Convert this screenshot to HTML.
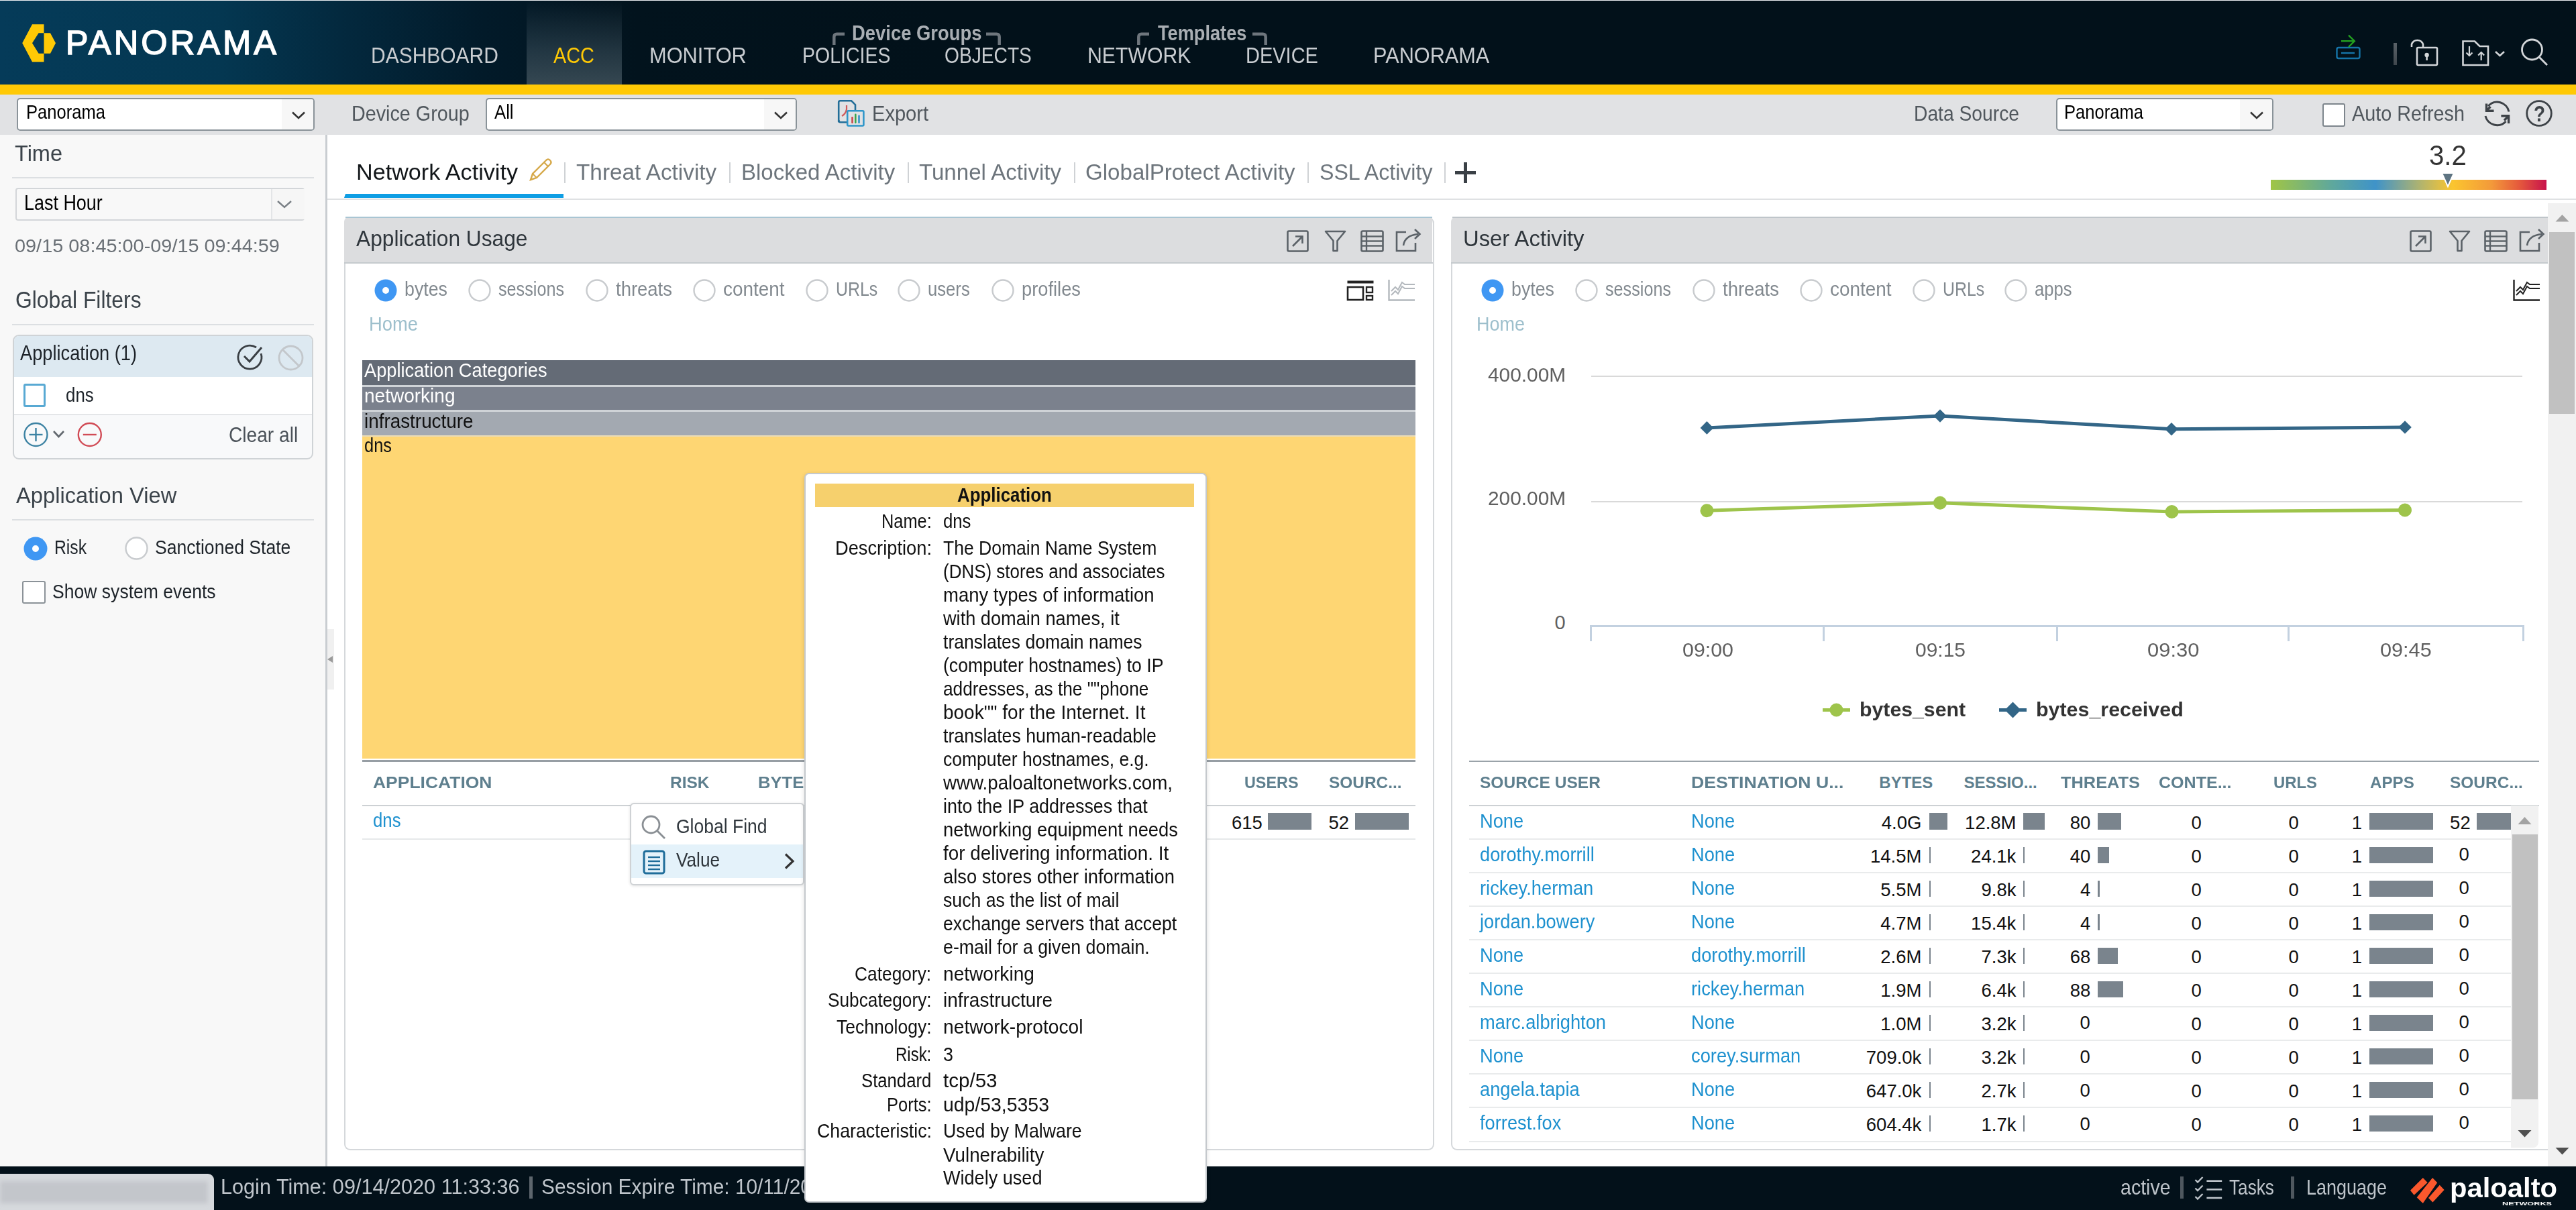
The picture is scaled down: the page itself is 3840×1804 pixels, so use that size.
<!DOCTYPE html>
<html><head><meta charset="utf-8"><title>Panorama ACC</title>
<style>
html,body{margin:0;padding:0;}
body{width:3840px;height:1804px;position:relative;overflow:hidden;background:#fff;font-family:"Liberation Sans",sans-serif;}
.t{position:absolute;white-space:nowrap;}
svg{overflow:visible}
</style></head><body>
<div style="position:absolute;left:0.0px;top:0.0px;width:3840.0px;height:126.0px;background:linear-gradient(90deg,#053b59 0px,#043751 330px,#03283d 520px,#021a29 720px,#02131d 950px,#02111a 1400px,#02111a 3840px);"></div>
<div style="position:absolute;left:0.0px;top:0.0px;width:3840.0px;height:1.0px;background:#eef0f4;"></div>
<div style="position:absolute;left:785.0px;top:1.0px;width:142.0px;height:125.0px;background:linear-gradient(180deg,rgba(60,80,92,0) 0%,rgba(60,80,92,0.55) 60%,rgba(62,80,90,0.85) 100%);"></div>
<svg style="position:absolute;left:30.0px;top:34.0px;" width="56.0" height="61.0" viewBox="0 0 56.0 61.0"><polygon fill="#ffc905" points="18,2.3 35.5,2.3 35.5,15.3 27.6,15.3 18,30.3 27.6,45.7 35.5,45.7 35.5,58.2 18,58.2 3.2,30.3"/><polygon fill="#ffc905" points="35.5,15.3 45,15.3 53,30.3 45,45.7 35.5,45.7"/></svg>
<div class="t" style="left:97.8px;top:38.7px;font-size:50.70px;line-height:50.70px;color:#ffffff;font-weight:normal;letter-spacing:4px;-webkit-text-stroke:1.5px #ffffff;">PANORAMA</div>
<div class="t" style="left:553.0px;top:66.8px;font-size:32.60px;line-height:32.60px;color:#c9cdd1;font-weight:normal;transform:scaleX(0.9200);transform-origin:0 0;">DASHBOARD</div>
<div class="t" style="left:968.0px;top:66.8px;font-size:32.60px;line-height:32.60px;color:#c9cdd1;font-weight:normal;transform:scaleX(0.9453);transform-origin:0 0;">MONITOR</div>
<div class="t" style="left:1195.5px;top:66.8px;font-size:32.60px;line-height:32.60px;color:#c9cdd1;font-weight:normal;transform:scaleX(0.8745);transform-origin:0 0;">POLICIES</div>
<div class="t" style="left:1408.0px;top:66.8px;font-size:32.60px;line-height:32.60px;color:#c9cdd1;font-weight:normal;transform:scaleX(0.8645);transform-origin:0 0;">OBJECTS</div>
<div class="t" style="left:1621.0px;top:66.8px;font-size:32.60px;line-height:32.60px;color:#c9cdd1;font-weight:normal;transform:scaleX(0.9274);transform-origin:0 0;">NETWORK</div>
<div class="t" style="left:1857.0px;top:66.8px;font-size:32.60px;line-height:32.60px;color:#c9cdd1;font-weight:normal;transform:scaleX(0.8900);transform-origin:0 0;">DEVICE</div>
<div class="t" style="left:2046.6px;top:66.8px;font-size:32.60px;line-height:32.60px;color:#c9cdd1;font-weight:normal;transform:scaleX(0.9414);transform-origin:0 0;">PANORAMA</div>
<div class="t" style="left:825.0px;top:66.8px;font-size:32.60px;line-height:32.60px;color:#ffc905;font-weight:normal;transform:scaleX(0.8858);transform-origin:0 0;">ACC</div>
<div class="t" style="left:1269.8px;top:34.0px;font-size:31.00px;line-height:31.00px;color:#a9aeb3;font-weight:bold;transform:scaleX(0.8840);transform-origin:0 0;">Device Groups</div>
<div class="t" style="left:1725.6px;top:34.0px;font-size:31.00px;line-height:31.00px;color:#a9aeb3;font-weight:bold;transform:scaleX(0.8765);transform-origin:0 0;">Templates</div>
<svg style="position:absolute;left:1240.5px;top:46.0px;" width="20.0" height="24.0" viewBox="0 0 20.0 24.0"><path d="M2.3,21 V9 Q2.3,4.7 6.5,4.7 H18" fill="none" stroke="#6e767d" stroke-width="4.5"/></svg>
<svg style="position:absolute;left:1470.0px;top:46.0px;" width="22.0" height="24.0" viewBox="0 0 22.0 24.0"><path d="M0,4.7 H15.5 Q19.7,4.7 19.7,9 V21" fill="none" stroke="#6e767d" stroke-width="4.5"/></svg>
<svg style="position:absolute;left:1695.0px;top:46.0px;" width="20.0" height="24.0" viewBox="0 0 20.0 24.0"><path d="M2.3,21 V9 Q2.3,4.7 6.5,4.7 H18" fill="none" stroke="#6e767d" stroke-width="4.5"/></svg>
<svg style="position:absolute;left:1867.0px;top:46.0px;" width="22.0" height="24.0" viewBox="0 0 22.0 24.0"><path d="M0,4.7 H15.5 Q19.7,4.7 19.7,9 V21" fill="none" stroke="#6e767d" stroke-width="4.5"/></svg>
<svg style="position:absolute;left:3480.0px;top:50.0px;" width="42.0" height="40.0" viewBox="0 0 42.0 40.0"><rect x="3.5" y="21" width="34" height="16" rx="2.5" fill="none" stroke="#1574a8" stroke-width="2.4"/><line x1="10" y1="29" x2="30" y2="29" stroke="#1574a8" stroke-width="2.4"/><line x1="10" y1="11.2" x2="29.5" y2="11.2" stroke="#23a020" stroke-width="2.4"/><polyline points="21,2.7 29.8,11.2 21,20" fill="none" stroke="#23a020" stroke-width="2.4"/></svg>
<div style="position:absolute;left:3568.3px;top:64.0px;width:4.7px;height:33.0px;background:linear-gradient(180deg,#5a6268,#3f474d);"></div>
<svg style="position:absolute;left:3590.0px;top:55.0px;" width="50.0" height="45.0" viewBox="0 0 50.0 45.0"><path d="M5,15 V11 A9,9 0 0 1 22,11 V15" fill="none" stroke="#d3d6d9" stroke-width="2.6"/><rect x="13" y="16" width="30" height="26" rx="1.5" fill="none" stroke="#d3d6d9" stroke-width="2.6"/><circle cx="27.6" cy="27" r="3.2" fill="#d3d6d9"/><line x1="27.6" y1="27" x2="27.6" y2="35" stroke="#d3d6d9" stroke-width="2.6"/></svg>
<svg style="position:absolute;left:3668.0px;top:58.0px;" width="72.0" height="42.0" viewBox="0 0 72.0 42.0"><path d="M3.5,39 V3.5 H21 L28.5,11 H41 V39 Z" fill="none" stroke="#d3d6d9" stroke-width="2.6"/><path d="M13,11 V25 M8.5,20.5 L13,25 L17.5,20.5" fill="none" stroke="#d3d6d9" stroke-width="2.2"/><path d="M30.7,32 V20 M26.2,24.5 L30.7,20 L35.2,24.5" fill="none" stroke="#d3d6d9" stroke-width="2.2"/><polyline points="52,19 58.5,25 65,19" fill="none" stroke="#d3d6d9" stroke-width="2.6"/></svg>
<svg style="position:absolute;left:3755.0px;top:55.0px;" width="47.0" height="45.0" viewBox="0 0 47.0 45.0"><circle cx="19.5" cy="19" r="15" fill="none" stroke="#d3d6d9" stroke-width="2.8"/><line x1="30" y1="30" x2="42" y2="42" stroke="#d3d6d9" stroke-width="2.8"/></svg>
<div style="position:absolute;left:0.0px;top:126.0px;width:3840.0px;height:15.0px;background:#ffc905;"></div>
<div style="position:absolute;left:0.0px;top:141.0px;width:3840.0px;height:60.0px;background:#e1e2e4;"></div>
<div style="position:absolute;left:25.0px;top:146.0px;width:444.0px;height:49.0px;box-sizing:border-box;background:#fff;border:2px solid #8a9399;border-radius:5px;"></div>
<div style="position:absolute;left:420.0px;top:148.0px;width:47.0px;height:45.0px;background:#f7f7f7;border-radius:0 3px 3px 0;"></div>
<svg style="position:absolute;left:433.5px;top:164.5px;" width="22.0" height="14.0" viewBox="0 0 22.0 14.0"><polyline points="2,2.5 11,11 20,2.5" fill="none" stroke="#333" stroke-width="2.6"/></svg>
<div class="t" style="left:39.0px;top:153.3px;font-size:29.00px;line-height:29.00px;color:#000;font-weight:normal;transform:scaleX(0.8817);transform-origin:0 0;">Panorama</div>
<div class="t" style="left:524.0px;top:153.5px;font-size:31.50px;line-height:31.50px;color:#50575d;font-weight:normal;transform:scaleX(0.9121);transform-origin:0 0;">Device Group</div>
<div style="position:absolute;left:724.0px;top:146.0px;width:464.0px;height:49.0px;box-sizing:border-box;background:#fff;border:2px solid #8a9399;border-radius:5px;"></div>
<div style="position:absolute;left:1139.0px;top:148.0px;width:47.0px;height:45.0px;background:#f7f7f7;border-radius:0 3px 3px 0;"></div>
<svg style="position:absolute;left:1152.5px;top:164.5px;" width="22.0" height="14.0" viewBox="0 0 22.0 14.0"><polyline points="2,2.5 11,11 20,2.5" fill="none" stroke="#333" stroke-width="2.6"/></svg>
<div class="t" style="left:737.4px;top:153.3px;font-size:29.00px;line-height:29.00px;color:#000;font-weight:normal;transform:scaleX(0.8865);transform-origin:0 0;">All</div>
<svg style="position:absolute;left:1240.0px;top:143.0px;" width="52.0" height="50.0" viewBox="0 0 52.0 50.0"><path d="M10.2,39.2 V9.5 Q10.2,7.2 12.5,7.2 H29 L35,13.2 V21.5" fill="none" stroke="#236e98" stroke-width="2.6"/><path d="M10.2,36 Q10.2,39.2 13,39.2 H22.5" fill="none" stroke="#236e98" stroke-width="2.6"/><path d="M22,14 V20 Q20.5,27 15,30" fill="none" stroke="#d05a5a" stroke-width="2.2"/><rect x="23.2" y="22.3" width="24.2" height="22.2" rx="1.5" fill="#e1e2e4" stroke="#2e96c9" stroke-width="2.6"/><rect x="29.2" y="31" width="2.6" height="10" rx="1.3" fill="#c9484a"/><rect x="34" y="26.5" width="2.6" height="14.5" rx="1.3" fill="#3aa64c"/><rect x="39.2" y="28.5" width="2.6" height="12.5" rx="1.3" fill="#3194c6"/></svg>
<div class="t" style="left:1300.0px;top:153.5px;font-size:31.50px;line-height:31.50px;color:#50575d;font-weight:normal;transform:scaleX(0.9227);transform-origin:0 0;">Export</div>
<div class="t" style="left:2853.0px;top:153.5px;font-size:31.50px;line-height:31.50px;color:#50575d;font-weight:normal;transform:scaleX(0.8964);transform-origin:0 0;">Data Source</div>
<div style="position:absolute;left:3065.0px;top:146.0px;width:324.0px;height:49.0px;box-sizing:border-box;background:#fff;border:2px solid #8a9399;border-radius:5px;"></div>
<div style="position:absolute;left:3339.0px;top:148.0px;width:48.0px;height:45.0px;background:#f7f7f7;border-radius:0 3px 3px 0;"></div>
<svg style="position:absolute;left:3353.0px;top:164.5px;" width="22.0" height="14.0" viewBox="0 0 22.0 14.0"><polyline points="2,2.5 11,11 20,2.5" fill="none" stroke="#333" stroke-width="2.6"/></svg>
<div class="t" style="left:3077.0px;top:153.3px;font-size:29.00px;line-height:29.00px;color:#000;font-weight:normal;transform:scaleX(0.8817);transform-origin:0 0;">Panorama</div>
<div style="position:absolute;left:3462.0px;top:154.0px;width:34.0px;height:35.0px;box-sizing:border-box;background:#fff;border:2px solid #7d858c;border-radius:3px;"></div>
<div class="t" style="left:3506.0px;top:153.5px;font-size:31.50px;line-height:31.50px;color:#50575d;font-weight:normal;transform:scaleX(0.9136);transform-origin:0 0;">Auto Refresh</div>
<svg style="position:absolute;left:3700.0px;top:148.0px;" width="46.0" height="44.0" viewBox="0 0 46.0 44.0"><path d="M40,18.5 A18,18 0 0 0 9,10" fill="none" stroke="#3d4247" stroke-width="3"/><polyline points="6.5,6.5 6.5,17.2 17.5,17.2" fill="none" stroke="#3d4247" stroke-width="3.4"/><line x1="6.5" y1="17.2" x2="12.5" y2="11" stroke="#3d4247" stroke-width="3.4"/><path d="M5,25 A18,18 0 0 0 35.5,33" fill="none" stroke="#3d4247" stroke-width="3"/><polyline points="28.4,24.8 39.6,24.8 39.6,36" fill="none" stroke="#3d4247" stroke-width="3.4"/><line x1="39.6" y1="24.8" x2="33" y2="31.5" stroke="#3d4247" stroke-width="3.4"/></svg>
<svg style="position:absolute;left:3762.0px;top:146.0px;" width="46.0" height="46.0" viewBox="0 0 46.0 46.0"><circle cx="23" cy="23" r="18.3" fill="none" stroke="#3d4247" stroke-width="2.8"/></svg>
<div class="t" style="left:3776.5px;top:152.9px;font-size:33.00px;line-height:33.00px;color:#3d4247;font-weight:bold;transform:scaleX(0.8445);transform-origin:0 0;">?</div>
<div style="position:absolute;left:0.0px;top:201.0px;width:485.0px;height:1538.0px;background:#f8f8f8;"></div>
<div style="position:absolute;left:485.0px;top:201.0px;width:3.0px;height:1538.0px;background:#c9cdd1;"></div>
<div class="t" style="left:22.0px;top:211.1px;font-size:34.00px;line-height:34.00px;color:#3b434a;font-weight:normal;transform:scaleX(0.9557);transform-origin:0 0;">Time</div>
<div style="position:absolute;left:18.0px;top:264.0px;width:450.0px;height:2.0px;background:#dcdfe2;"></div>
<div style="position:absolute;left:23.0px;top:280.0px;width:431.0px;height:49.0px;box-sizing:border-box;background:#f8f8f8;border:2px solid #d3d6d9;border-radius:4px;"></div>
<div style="position:absolute;left:404.0px;top:282.0px;width:48.0px;height:45.0px;background:#f6f6f6;border-left:2px solid #e3e5e7;"></div>
<svg style="position:absolute;left:412.0px;top:298.0px;" width="24.0" height="14.0" viewBox="0 0 24.0 14.0"><polyline points="2,2 12,11 22,2" fill="none" stroke="#7a8086" stroke-width="2.4"/></svg>
<div class="t" style="left:36.0px;top:286.7px;font-size:31.50px;line-height:31.50px;color:#000000;font-weight:normal;transform:scaleX(0.8553);transform-origin:0 0;">Last Hour</div>
<div class="t" style="left:22.0px;top:352.2px;font-size:28.30px;line-height:28.30px;color:#6a7076;font-weight:normal;transform:scaleX(1.0203);transform-origin:0 0;">09/15 08:45:00-09/15 09:44:59</div>
<div class="t" style="left:23.0px;top:429.2px;font-size:35.00px;line-height:35.00px;color:#3b434a;font-weight:normal;transform:scaleX(0.9100);transform-origin:0 0;">Global Filters</div>
<div style="position:absolute;left:18.0px;top:483.0px;width:450.0px;height:2.0px;background:#dcdfe2;"></div>
<div style="position:absolute;left:19.0px;top:499.0px;width:448.0px;height:186.0px;box-sizing:border-box;border:2px solid #cfd3d6;border-radius:9px;background:#f8f9fa;overflow:hidden;"></div>
<div style="position:absolute;left:21.0px;top:501.0px;width:444.0px;height:61.0px;background:#dde9f1;border-radius:7px 7px 0 0;"></div>
<div style="position:absolute;left:21.0px;top:562.0px;width:444.0px;height:55.0px;background:#ffffff;"></div>
<div style="position:absolute;left:21.0px;top:617.0px;width:444.0px;height:2.0px;background:#e4e6e8;"></div>
<div class="t" style="left:30.0px;top:511.2px;font-size:31.50px;line-height:31.50px;color:#1d2329;font-weight:normal;transform:scaleX(0.8641);transform-origin:0 0;">Application (1)</div>
<svg style="position:absolute;left:352.0px;top:510.0px;" width="46.0" height="45.0" viewBox="0 0 46.0 45.0"><path d="M37,17 A17.5,17.5 0 1 1 30,8" fill="none" stroke="#3a3f44" stroke-width="2.8"/><polyline points="12,21 20,29 38,8" fill="none" stroke="#3a3f44" stroke-width="3"/></svg>
<svg style="position:absolute;left:412.0px;top:512.0px;" width="44.0" height="43.0" viewBox="0 0 44.0 43.0"><circle cx="21.5" cy="21.5" r="17.5" fill="none" stroke="#c3c7cb" stroke-width="2.8"/><line x1="9" y1="9" x2="34" y2="34" stroke="#c3c7cb" stroke-width="2.8"/></svg>
<div style="position:absolute;left:35.0px;top:572.0px;width:33.0px;height:35.0px;box-sizing:border-box;background:#fff;border:3px solid #58a9d3;border-radius:3px;"></div>
<div class="t" style="left:98.0px;top:574.9px;font-size:29.00px;line-height:29.00px;color:#1d2329;font-weight:normal;transform:scaleX(0.8917);transform-origin:0 0;">dns</div>
<svg style="position:absolute;left:33.0px;top:627.0px;" width="43.0" height="43.0" viewBox="0 0 43.0 43.0"><circle cx="20.5" cy="21" r="17" fill="none" stroke="#3d83a3" stroke-width="2.4"/><line x1="20.5" y1="11" x2="20.5" y2="31" stroke="#3d83a3" stroke-width="2.4"/><line x1="10.5" y1="21" x2="30.5" y2="21" stroke="#3d83a3" stroke-width="2.4"/></svg>
<svg style="position:absolute;left:78.0px;top:640.0px;" width="20.0" height="16.0" viewBox="0 0 20.0 16.0"><polyline points="2,3 9.5,11 17,3" fill="none" stroke="#62686e" stroke-width="2.6"/></svg>
<svg style="position:absolute;left:112.0px;top:627.0px;" width="44.0" height="43.0" viewBox="0 0 44.0 43.0"><circle cx="21.8" cy="21" r="17" fill="none" stroke="#d14b55" stroke-width="2.4"/><line x1="11.8" y1="21" x2="31.8" y2="21" stroke="#d14b55" stroke-width="2.4"/></svg>
<div class="t" style="left:340.5px;top:632.9px;font-size:31.50px;line-height:31.50px;color:#4b5259;font-weight:normal;transform:scaleX(0.8933);transform-origin:0 0;">Clear all</div>
<div class="t" style="left:23.6px;top:721.5px;font-size:33.50px;line-height:33.50px;color:#3b434a;font-weight:normal;transform:scaleX(0.9759);transform-origin:0 0;">Application View</div>
<div style="position:absolute;left:18.0px;top:774.0px;width:450.0px;height:2.0px;background:#dcdfe2;"></div>
<svg style="position:absolute;left:35.0px;top:800.0px;" width="36.0" height="36.0" viewBox="0 0 36.0 36.0"><circle cx="18.0" cy="18.0" r="17.5" fill="#3f97f3"/><circle cx="18.0" cy="18.0" r="5" fill="#fff"/></svg>
<div class="t" style="left:80.8px;top:800.9px;font-size:29.50px;line-height:29.50px;color:#1d2329;font-weight:normal;transform:scaleX(0.8390);transform-origin:0 0;">Risk</div>
<svg style="position:absolute;left:185.7px;top:800.0px;" width="35.0" height="35.0" viewBox="0 0 35.0 35.0"><circle cx="17.5" cy="17.5" r="16.0" fill="#fff" stroke="#c8cbce" stroke-width="2.4"/></svg>
<div class="t" style="left:231.0px;top:800.9px;font-size:29.50px;line-height:29.50px;color:#1d2329;font-weight:normal;transform:scaleX(0.9007);transform-origin:0 0;">Sanctioned State</div>
<div style="position:absolute;left:33.0px;top:866.0px;width:34.5px;height:34.0px;box-sizing:border-box;background:#fff;border:2px solid #8b9298;border-radius:3px;"></div>
<div class="t" style="left:78.0px;top:866.9px;font-size:29.50px;line-height:29.50px;color:#1d2329;font-weight:normal;transform:scaleX(0.9005);transform-origin:0 0;">Show system events</div>
<svg style="position:absolute;left:487.0px;top:938.0px;" width="13.0" height="90.0" viewBox="0 0 13.0 90.0"><path d="M1,0 L11,0 L11,90 L1,90 Z" fill="#f0f0f0"/><polygon points="1,45 9,40 9,50" fill="#9a9a9a"/></svg>
<div style="position:absolute;left:488.0px;top:296.0px;width:3352.0px;height:2.0px;background:#dfe1e3;"></div>
<div class="t" style="left:531.0px;top:238.8px;font-size:34.00px;line-height:34.00px;color:#121619;font-weight:normal;transform:scaleX(1.0044);transform-origin:0 0;">Network Activity</div>
<svg style="position:absolute;left:787.0px;top:236.0px;" width="39.0" height="36.0" viewBox="0 0 39.0 36.0"><path d="M4,32 L7,23 L27,3 Q30,0 33,3 Q36,6 33,9 L13,29 Z" fill="none" stroke="#d6a94a" stroke-width="2.4"/><line x1="24" y1="6" x2="30" y2="12" stroke="#d6a94a" stroke-width="2.2"/><line x1="7" y1="23" x2="13" y2="29" stroke="#d6a94a" stroke-width="2"/></svg>
<div class="t" style="left:858.5px;top:238.8px;font-size:34.00px;line-height:34.00px;color:#6d757c;font-weight:normal;transform:scaleX(0.9798);transform-origin:0 0;">Threat Activity</div>
<div class="t" style="left:1104.7px;top:238.8px;font-size:34.00px;line-height:34.00px;color:#6d757c;font-weight:normal;transform:scaleX(0.9707);transform-origin:0 0;">Blocked Activity</div>
<div class="t" style="left:1370.0px;top:238.8px;font-size:34.00px;line-height:34.00px;color:#6d757c;font-weight:normal;transform:scaleX(0.9727);transform-origin:0 0;">Tunnel Activity</div>
<div class="t" style="left:1618.0px;top:238.8px;font-size:34.00px;line-height:34.00px;color:#6d757c;font-weight:normal;transform:scaleX(0.9732);transform-origin:0 0;">GlobalProtect Activity</div>
<div class="t" style="left:1966.5px;top:238.8px;font-size:34.00px;line-height:34.00px;color:#6d757c;font-weight:normal;transform:scaleX(0.9453);transform-origin:0 0;">SSL Activity</div>
<div style="position:absolute;left:841.0px;top:242.0px;width:2.0px;height:31.0px;background:#cfd2d5;"></div>
<div style="position:absolute;left:1086.7px;top:242.0px;width:2.0px;height:31.0px;background:#cfd2d5;"></div>
<div style="position:absolute;left:1353.0px;top:242.0px;width:2.0px;height:31.0px;background:#cfd2d5;"></div>
<div style="position:absolute;left:1600.7px;top:242.0px;width:2.0px;height:31.0px;background:#cfd2d5;"></div>
<div style="position:absolute;left:1949.0px;top:242.0px;width:2.0px;height:31.0px;background:#cfd2d5;"></div>
<div style="position:absolute;left:2152.7px;top:242.0px;width:2.0px;height:31.0px;background:#cfd2d5;"></div>
<div style="position:absolute;left:2169.0px;top:254.5px;width:31.0px;height:5.0px;background:#3a4046;"></div>
<div style="position:absolute;left:2182.0px;top:242.0px;width:5.0px;height:30.5px;background:#3a4046;"></div>
<svg style="position:absolute;left:513.0px;top:289.0px;" width="327.0" height="7.0" viewBox="0 0 327.0 7.0"><polygon points="2,0 327,0 327,6 0,6" fill="#0f9ee4"/></svg>
<div class="t" style="left:3620.6px;top:211.3px;font-size:42.00px;line-height:42.00px;color:#333333;font-weight:normal;transform:scaleX(0.9575);transform-origin:0 0;">3.2</div>
<div style="position:absolute;left:3385.0px;top:268.0px;width:411.0px;height:15.0px;background:linear-gradient(90deg,#a0c545 0%,#5fa89c 22%,#3f93c9 38%,#b6b56a 55%,#fbc52f 66%,#f39a3a 80%,#e55a3c 90%,#c8124c 100%);"></div>
<svg style="position:absolute;left:3638.0px;top:256.0px;" width="22.0" height="24.0" viewBox="0 0 22.0 24.0"><polygon points="2,2 20,2 11,22" fill="#5e7482" stroke="#fff" stroke-width="2"/></svg>
<div style="position:absolute;left:513.0px;top:330.0px;width:1625.0px;height:1385.0px;box-sizing:border-box;border:2px solid #d5d8db;border-top:none;border-radius:0 0 9px 9px;background:#fff;"></div>
<div style="position:absolute;left:2126.0px;top:323.0px;width:12.0px;height:17.0px;box-sizing:border-box;border-right:2px solid #d5d8db;border-top-right-radius:10px;"></div>
<div style="position:absolute;left:513.0px;top:323.0px;width:1622.0px;height:69.0px;background:#dcdddf;border-radius:8px 0 0 0;"></div>
<div style="position:absolute;left:515.0px;top:323.0px;width:1620.0px;height:2.0px;background:#a9c5d3;"></div>
<div style="position:absolute;left:513.0px;top:391.0px;width:1623.0px;height:2.0px;background:#c5cace;"></div>
<div class="t" style="left:531.4px;top:339.2px;font-size:33.60px;line-height:33.60px;color:#2f363c;font-weight:normal;transform:scaleX(0.9438);transform-origin:0 0;">Application Usage</div>
<svg style="position:absolute;left:1917.7px;top:343.0px;" width="34.0" height="33.0" viewBox="0 0 34.0 33.0"><rect x="1.5" y="1.5" width="30" height="30" rx="2" fill="none" stroke="#5b6268" stroke-width="2.6"/><line x1="9" y1="24" x2="23" y2="10" stroke="#5b6268" stroke-width="2.6"/><polyline points="13,9.5 23.5,9.5 23.5,20" fill="none" stroke="#5b6268" stroke-width="2.6"/></svg>
<svg style="position:absolute;left:1974.0px;top:343.0px;" width="33.0" height="33.0" viewBox="0 0 33.0 33.0"><path d="M2,2 H31 L19.5,16 V31 H13.5 V16 Z" fill="none" stroke="#5b6268" stroke-width="2.6" stroke-linejoin="round"/></svg>
<svg style="position:absolute;left:2027.8px;top:343.0px;" width="36.0" height="33.0" viewBox="0 0 36.0 33.0"><rect x="1.5" y="1.5" width="32" height="30" rx="2" fill="none" stroke="#5b6268" stroke-width="2.6"/><line x1="9" y1="2" x2="9" y2="31" stroke="#5b6268" stroke-width="2.4"/><line x1="2" y1="9.5" x2="33" y2="9.5" stroke="#5b6268" stroke-width="2.4"/><line x1="2" y1="16.5" x2="33" y2="16.5" stroke="#5b6268" stroke-width="2.4"/><line x1="2" y1="23.5" x2="33" y2="23.5" stroke="#5b6268" stroke-width="2.4"/></svg>
<svg style="position:absolute;left:2080.0px;top:340.0px;" width="41.0" height="36.0" viewBox="0 0 41.0 36.0"><path d="M16,6 H2 V34 H30 V22" fill="none" stroke="#5b6268" stroke-width="2.6"/><path d="M12,26 Q14,11 34,9" fill="none" stroke="#5b6268" stroke-width="2.6"/><polyline points="29,2 36.5,9 29,16" fill="none" stroke="#5b6268" stroke-width="2.6"/></svg>
<svg style="position:absolute;left:557.9px;top:415.7px;" width="34.0" height="34.0" viewBox="0 0 34.0 34.0"><circle cx="17.0" cy="17.0" r="16.5" fill="#3f97f3"/><circle cx="17.0" cy="17.0" r="5" fill="#fff"/></svg>
<div class="t" style="left:603.0px;top:415.9px;font-size:29.50px;line-height:29.50px;color:#82898f;font-weight:normal;transform:scaleX(0.9077);transform-origin:0 0;">bytes</div>
<svg style="position:absolute;left:697.7px;top:415.7px;" width="34.0" height="34.0" viewBox="0 0 34.0 34.0"><circle cx="17.0" cy="17.0" r="15.5" fill="#fff" stroke="#c8cbce" stroke-width="2.4"/></svg>
<div class="t" style="left:743.0px;top:415.9px;font-size:29.50px;line-height:29.50px;color:#82898f;font-weight:normal;transform:scaleX(0.8540);transform-origin:0 0;">sessions</div>
<svg style="position:absolute;left:873.0px;top:415.7px;" width="34.0" height="34.0" viewBox="0 0 34.0 34.0"><circle cx="17.0" cy="17.0" r="15.5" fill="#fff" stroke="#c8cbce" stroke-width="2.4"/></svg>
<div class="t" style="left:918.0px;top:415.9px;font-size:29.50px;line-height:29.50px;color:#82898f;font-weight:normal;transform:scaleX(0.9313);transform-origin:0 0;">threats</div>
<svg style="position:absolute;left:1033.0px;top:415.7px;" width="34.0" height="34.0" viewBox="0 0 34.0 34.0"><circle cx="17.0" cy="17.0" r="15.5" fill="#fff" stroke="#c8cbce" stroke-width="2.4"/></svg>
<div class="t" style="left:1078.0px;top:415.9px;font-size:29.50px;line-height:29.50px;color:#82898f;font-weight:normal;transform:scaleX(0.9456);transform-origin:0 0;">content</div>
<svg style="position:absolute;left:1201.0px;top:415.7px;" width="34.0" height="34.0" viewBox="0 0 34.0 34.0"><circle cx="17.0" cy="17.0" r="15.5" fill="#fff" stroke="#c8cbce" stroke-width="2.4"/></svg>
<div class="t" style="left:1245.5px;top:415.9px;font-size:29.50px;line-height:29.50px;color:#82898f;font-weight:normal;transform:scaleX(0.8434);transform-origin:0 0;">URLs</div>
<svg style="position:absolute;left:1337.7px;top:415.7px;" width="34.0" height="34.0" viewBox="0 0 34.0 34.0"><circle cx="17.0" cy="17.0" r="15.5" fill="#fff" stroke="#c8cbce" stroke-width="2.4"/></svg>
<div class="t" style="left:1383.0px;top:415.9px;font-size:29.50px;line-height:29.50px;color:#82898f;font-weight:normal;transform:scaleX(0.8693);transform-origin:0 0;">users</div>
<svg style="position:absolute;left:1477.5px;top:415.7px;" width="34.0" height="34.0" viewBox="0 0 34.0 34.0"><circle cx="17.0" cy="17.0" r="15.5" fill="#fff" stroke="#c8cbce" stroke-width="2.4"/></svg>
<div class="t" style="left:1523.0px;top:415.9px;font-size:29.50px;line-height:29.50px;color:#82898f;font-weight:normal;transform:scaleX(0.9250);transform-origin:0 0;">profiles</div>
<svg style="position:absolute;left:2007.0px;top:417.0px;" width="42.0" height="33.0" viewBox="0 0 42.0 33.0"><rect x="1.5" y="1.5" width="39" height="4" fill="#222"/><rect x="2" y="11" width="23" height="19" fill="none" stroke="#222" stroke-width="2.6"/><rect x="30" y="11" width="9" height="8" fill="none" stroke="#222" stroke-width="2.4"/><rect x="30" y="24" width="9" height="6" fill="none" stroke="#222" stroke-width="2.4"/></svg>
<svg style="position:absolute;left:2068.6px;top:417.0px;" width="41.0" height="32.0" viewBox="0 0 41.0 32.0"><polyline points="1.5,0 1.5,30.5 40,30.5" fill="none" stroke="#b3b8bd" stroke-width="2.4"/><polyline points="5,17 11,11 15,15 21,4 25,7 40,7" fill="none" stroke="#b3b8bd" stroke-width="2"/><polyline points="5,23 11,17 15,21 21,10 25,13 40,13" fill="none" stroke="#b3b8bd" stroke-width="2"/></svg>
<div class="t" style="left:550.0px;top:469.0px;font-size:28.70px;line-height:28.70px;color:#9dbfcc;font-weight:normal;transform:scaleX(0.9535);transform-origin:0 0;">Home</div>
<div style="position:absolute;left:539.7px;top:537.0px;width:1570.3px;height:37.3px;background:#646b76;"></div>
<div style="position:absolute;left:539.7px;top:574.3px;width:1570.3px;height:2.7px;background:#cfd3d7;"></div>
<div style="position:absolute;left:539.7px;top:577.0px;width:1570.3px;height:34.4px;background:#7b818d;"></div>
<div style="position:absolute;left:539.7px;top:611.4px;width:1570.3px;height:3.0px;background:#cfd3d7;"></div>
<div style="position:absolute;left:539.7px;top:614.4px;width:1570.3px;height:34.6px;background:#a3a9b1;"></div>
<div style="position:absolute;left:539.7px;top:649.0px;width:1570.3px;height:1.5px;background:#e9dcb8;"></div>
<div style="position:absolute;left:539.7px;top:650.5px;width:1570.3px;height:480.9px;background:#fed673;"></div>
<div style="position:absolute;left:539.7px;top:1133.0px;width:1570.3px;height:2.5px;background:#979ea4;"></div>
<div class="t" style="left:543.0px;top:538.4px;font-size:28.70px;line-height:28.70px;color:#ffffff;font-weight:normal;transform:scaleX(0.9497);transform-origin:0 0;">Application Categories</div>
<div class="t" style="left:543.0px;top:575.6px;font-size:28.70px;line-height:28.70px;color:#ffffff;font-weight:normal;transform:scaleX(0.9765);transform-origin:0 0;">networking</div>
<div class="t" style="left:543.0px;top:613.6px;font-size:28.70px;line-height:28.70px;color:#111111;font-weight:normal;transform:scaleX(0.9710);transform-origin:0 0;">infrastructure</div>
<div class="t" style="left:543.0px;top:649.6px;font-size:28.70px;line-height:28.70px;color:#111111;font-weight:normal;transform:scaleX(0.8859);transform-origin:0 0;">dns</div>
<div class="t" style="left:555.5px;top:1155.0px;font-size:24.00px;line-height:24.00px;color:#5e7f8e;font-weight:bold;transform:scaleX(1.1030);transform-origin:0 0;">APPLICATION</div>
<div class="t" style="left:998.5px;top:1155.0px;font-size:24.00px;line-height:24.00px;color:#5e7f8e;font-weight:bold;transform:scaleX(1.0199);transform-origin:0 0;">RISK</div>
<div class="t" style="left:1129.7px;top:1155.0px;font-size:24.00px;line-height:24.00px;color:#5e7f8e;font-weight:bold;transform:scaleX(1.0657);transform-origin:0 0;">BYTES</div>
<div class="t" style="left:1854.5px;top:1155.0px;font-size:24.00px;line-height:24.00px;color:#5e7f8e;font-weight:bold;transform:scaleX(0.9736);transform-origin:0 0;">USERS</div>
<div class="t" style="left:1980.5px;top:1155.0px;font-size:24.00px;line-height:24.00px;color:#5e7f8e;font-weight:bold;transform:scaleX(1.0171);transform-origin:0 0;">SOURC...</div>
<div style="position:absolute;left:539.7px;top:1200.0px;width:1570.3px;height:2.0px;background:#cdd1d4;"></div>
<div class="t" style="left:555.5px;top:1209.3px;font-size:29.00px;line-height:29.00px;color:#1e91cf;font-weight:normal;transform:scaleX(0.8875);transform-origin:0 0;">dns</div>
<div class="t" style="left:1835.9px;top:1213.3px;font-size:27.50px;line-height:27.50px;color:#111;font-weight:normal;">615</div>
<div style="position:absolute;left:1890.0px;top:1212.0px;width:65.0px;height:24.7px;background:#7a848d;"></div>
<div class="t" style="left:1980.4px;top:1213.3px;font-size:27.50px;line-height:27.50px;color:#111;font-weight:normal;">52</div>
<div style="position:absolute;left:2020.0px;top:1212.0px;width:80.0px;height:24.7px;background:#7a848d;"></div>
<div style="position:absolute;left:539.7px;top:1250.0px;width:1570.3px;height:2.0px;background:#e6e8ea;"></div>
<div style="position:absolute;left:2163.0px;top:330.0px;width:1677.0px;height:1385.0px;box-sizing:border-box;border:2px solid #d5d8db;border-top:none;border-radius:0 0 9px 9px;background:#fff;"></div>
<div style="position:absolute;left:3828.0px;top:323.0px;width:12.0px;height:17.0px;box-sizing:border-box;border-right:2px solid #d5d8db;border-top-right-radius:10px;"></div>
<div style="position:absolute;left:2163.0px;top:323.0px;width:1674.0px;height:69.0px;background:#dcdddf;border-radius:8px 0 0 0;"></div>
<div style="position:absolute;left:2165.0px;top:323.0px;width:1672.0px;height:2.0px;background:#bfc5ca;"></div>
<div style="position:absolute;left:2163.0px;top:391.0px;width:1675.0px;height:2.0px;background:#c5cace;"></div>
<div class="t" style="left:2181.4px;top:339.2px;font-size:33.60px;line-height:33.60px;color:#2f363c;font-weight:normal;transform:scaleX(0.9773);transform-origin:0 0;">User Activity</div>
<svg style="position:absolute;left:3592.0px;top:343.0px;" width="34.0" height="33.0" viewBox="0 0 34.0 33.0"><rect x="1.5" y="1.5" width="30" height="30" rx="2" fill="none" stroke="#5b6268" stroke-width="2.6"/><line x1="9" y1="24" x2="23" y2="10" stroke="#5b6268" stroke-width="2.6"/><polyline points="13,9.5 23.5,9.5 23.5,20" fill="none" stroke="#5b6268" stroke-width="2.6"/></svg>
<svg style="position:absolute;left:3649.6px;top:343.0px;" width="33.0" height="33.0" viewBox="0 0 33.0 33.0"><path d="M2,2 H31 L19.5,16 V31 H13.5 V16 Z" fill="none" stroke="#5b6268" stroke-width="2.6" stroke-linejoin="round"/></svg>
<svg style="position:absolute;left:3702.5px;top:343.0px;" width="36.0" height="33.0" viewBox="0 0 36.0 33.0"><rect x="1.5" y="1.5" width="32" height="30" rx="2" fill="none" stroke="#5b6268" stroke-width="2.6"/><line x1="9" y1="2" x2="9" y2="31" stroke="#5b6268" stroke-width="2.4"/><line x1="2" y1="9.5" x2="33" y2="9.5" stroke="#5b6268" stroke-width="2.4"/><line x1="2" y1="16.5" x2="33" y2="16.5" stroke="#5b6268" stroke-width="2.4"/><line x1="2" y1="23.5" x2="33" y2="23.5" stroke="#5b6268" stroke-width="2.4"/></svg>
<svg style="position:absolute;left:3755.0px;top:340.0px;" width="41.0" height="36.0" viewBox="0 0 41.0 36.0"><path d="M16,6 H2 V34 H30 V22" fill="none" stroke="#5b6268" stroke-width="2.6"/><path d="M12,26 Q14,11 34,9" fill="none" stroke="#5b6268" stroke-width="2.6"/><polyline points="29,2 36.5,9 29,16" fill="none" stroke="#5b6268" stroke-width="2.6"/></svg>
<svg style="position:absolute;left:2207.9px;top:415.7px;" width="34.0" height="34.0" viewBox="0 0 34.0 34.0"><circle cx="17.0" cy="17.0" r="16.5" fill="#3f97f3"/><circle cx="17.0" cy="17.0" r="5" fill="#fff"/></svg>
<div class="t" style="left:2253.0px;top:415.9px;font-size:29.50px;line-height:29.50px;color:#82898f;font-weight:normal;transform:scaleX(0.9077);transform-origin:0 0;">bytes</div>
<svg style="position:absolute;left:2347.7px;top:415.7px;" width="34.0" height="34.0" viewBox="0 0 34.0 34.0"><circle cx="17.0" cy="17.0" r="15.5" fill="#fff" stroke="#c8cbce" stroke-width="2.4"/></svg>
<div class="t" style="left:2393.0px;top:415.9px;font-size:29.50px;line-height:29.50px;color:#82898f;font-weight:normal;transform:scaleX(0.8540);transform-origin:0 0;">sessions</div>
<svg style="position:absolute;left:2523.0px;top:415.7px;" width="34.0" height="34.0" viewBox="0 0 34.0 34.0"><circle cx="17.0" cy="17.0" r="15.5" fill="#fff" stroke="#c8cbce" stroke-width="2.4"/></svg>
<div class="t" style="left:2568.0px;top:415.9px;font-size:29.50px;line-height:29.50px;color:#82898f;font-weight:normal;transform:scaleX(0.9313);transform-origin:0 0;">threats</div>
<svg style="position:absolute;left:2683.0px;top:415.7px;" width="34.0" height="34.0" viewBox="0 0 34.0 34.0"><circle cx="17.0" cy="17.0" r="15.5" fill="#fff" stroke="#c8cbce" stroke-width="2.4"/></svg>
<div class="t" style="left:2728.0px;top:415.9px;font-size:29.50px;line-height:29.50px;color:#82898f;font-weight:normal;transform:scaleX(0.9456);transform-origin:0 0;">content</div>
<svg style="position:absolute;left:2851.0px;top:415.7px;" width="34.0" height="34.0" viewBox="0 0 34.0 34.0"><circle cx="17.0" cy="17.0" r="15.5" fill="#fff" stroke="#c8cbce" stroke-width="2.4"/></svg>
<div class="t" style="left:2895.5px;top:415.9px;font-size:29.50px;line-height:29.50px;color:#82898f;font-weight:normal;transform:scaleX(0.8434);transform-origin:0 0;">URLs</div>
<svg style="position:absolute;left:2988.0px;top:415.7px;" width="34.0" height="34.0" viewBox="0 0 34.0 34.0"><circle cx="17.0" cy="17.0" r="15.5" fill="#fff" stroke="#c8cbce" stroke-width="2.4"/></svg>
<div class="t" style="left:3033.0px;top:415.9px;font-size:29.50px;line-height:29.50px;color:#82898f;font-weight:normal;transform:scaleX(0.8695);transform-origin:0 0;">apps</div>
<svg style="position:absolute;left:3745.5px;top:417.0px;" width="41.0" height="32.0" viewBox="0 0 41.0 32.0"><polyline points="1.5,0 1.5,30.5 40,30.5" fill="none" stroke="#222" stroke-width="2.4"/><polyline points="5,17 11,11 15,15 21,4 25,7 40,7" fill="none" stroke="#222" stroke-width="2"/><polyline points="5,23 11,17 15,21 21,10 25,13 40,13" fill="none" stroke="#222" stroke-width="2"/></svg>
<div class="t" style="left:2201.0px;top:469.0px;font-size:28.70px;line-height:28.70px;color:#9dbfcc;font-weight:normal;transform:scaleX(0.9405);transform-origin:0 0;">Home</div>
<div style="position:absolute;left:2372.0px;top:559.5px;width:1388.0px;height:2.0px;background:#d9d9d9;"></div>
<div style="position:absolute;left:2372.0px;top:747.0px;width:1388.0px;height:2.0px;background:#d9d9d9;"></div>
<div style="position:absolute;left:2371.0px;top:931.5px;width:1391.0px;height:3.0px;background:#c3d1e0;"></div>
<div style="position:absolute;left:2369.5px;top:932.0px;width:3.0px;height:24.0px;background:#c3d1e0;"></div>
<div style="position:absolute;left:2717.2px;top:932.0px;width:3.0px;height:24.0px;background:#c3d1e0;"></div>
<div style="position:absolute;left:3064.5px;top:932.0px;width:3.0px;height:24.0px;background:#c3d1e0;"></div>
<div style="position:absolute;left:3409.5px;top:932.0px;width:3.0px;height:24.0px;background:#c3d1e0;"></div>
<div style="position:absolute;left:3759.5px;top:932.0px;width:3.0px;height:24.0px;background:#c3d1e0;"></div>
<div class="t" style="left:2217.8px;top:544.9px;font-size:29.00px;line-height:29.00px;color:#5f5f5f;font-weight:normal;transform:scaleX(1.0294);transform-origin:0 0;">400.00M</div>
<div class="t" style="left:2217.8px;top:729.0px;font-size:29.00px;line-height:29.00px;color:#5f5f5f;font-weight:normal;transform:scaleX(1.0294);transform-origin:0 0;">200.00M</div>
<div class="t" style="left:2317.4px;top:914.1px;font-size:29.00px;line-height:29.00px;color:#5f5f5f;font-weight:normal;">0</div>
<div class="t" style="left:2508.0px;top:954.8px;font-size:29.00px;line-height:29.00px;color:#5f5f5f;font-weight:normal;transform:scaleX(1.0472);transform-origin:0 0;">09:00</div>
<div class="t" style="left:2855.0px;top:954.8px;font-size:29.00px;line-height:29.00px;color:#5f5f5f;font-weight:normal;transform:scaleX(1.0334);transform-origin:0 0;">09:15</div>
<div class="t" style="left:3201.0px;top:954.8px;font-size:29.00px;line-height:29.00px;color:#5f5f5f;font-weight:normal;transform:scaleX(1.0665);transform-origin:0 0;">09:30</div>
<div class="t" style="left:3547.7px;top:954.8px;font-size:29.00px;line-height:29.00px;color:#5f5f5f;font-weight:normal;transform:scaleX(1.0569);transform-origin:0 0;">09:45</div>
<svg style="position:absolute;left:2300.0px;top:500.0px;" width="1400.0" height="400.0" viewBox="0 0 1400.0 400.0"><polyline points="244.5,261.3 592.0,249.7 937.5,263.0 1285.0,260.5" fill="none" stroke="#9ec44b" stroke-width="5"/><circle cx="244.5" cy="261.3" r="10" fill="#9ec44b"/><circle cx="592.0" cy="249.7" r="10" fill="#9ec44b"/><circle cx="937.5" cy="263.0" r="10" fill="#9ec44b"/><circle cx="1285.0" cy="260.5" r="10" fill="#9ec44b"/><polyline points="244.4,137.9 592.0,120.0 937.0,139.8 1285.0,137.0" fill="none" stroke="#336687" stroke-width="5"/><polygon points="244.4,128.1 254.2,137.9 244.4,147.7 234.6,137.9" fill="#336687"/><polygon points="592.0,110.2 601.8,120.0 592.0,129.8 582.2,120.0" fill="#336687"/><polygon points="937.0,130.0 946.8,139.8 937.0,149.6 927.2,139.8" fill="#336687"/><polygon points="1285.0,127.2 1294.8,137.0 1285.0,146.8 1275.2,137.0" fill="#336687"/></svg>
<div style="position:absolute;left:2717.0px;top:1056.2px;width:40.7px;height:5.0px;background:#9ec44b;"></div>
<svg style="position:absolute;left:2727.0px;top:1048.0px;" width="21.0" height="21.0" viewBox="0 0 21.0 21.0"><circle cx="10.5" cy="10.5" r="10" fill="#9ec44b"/></svg>
<div class="t" style="left:2771.5px;top:1043.1px;font-size:30.00px;line-height:30.00px;color:#333333;font-weight:bold;transform:scaleX(1.0086);transform-origin:0 0;">bytes_sent</div>
<div style="position:absolute;left:2980.0px;top:1056.0px;width:41.0px;height:5.0px;background:#336687;"></div>
<svg style="position:absolute;left:2988.0px;top:1046.0px;" width="25.0" height="25.0" viewBox="0 0 25.0 25.0"><polygon points="12.5,0.5 24.5,12.5 12.5,24.5 0.5,12.5" fill="#336687"/></svg>
<div class="t" style="left:3035.0px;top:1043.1px;font-size:30.00px;line-height:30.00px;color:#333333;font-weight:bold;transform:scaleX(1.0133);transform-origin:0 0;">bytes_received</div>
<div style="position:absolute;left:2190.0px;top:1133.5px;width:1595.0px;height:2.0px;background:#9aa3a9;"></div>
<div class="t" style="left:2205.5px;top:1155.0px;font-size:24.00px;line-height:24.00px;color:#5e7f8e;font-weight:bold;transform:scaleX(1.0219);transform-origin:0 0;">SOURCE USER</div>
<div class="t" style="left:2521.0px;top:1155.0px;font-size:24.00px;line-height:24.00px;color:#5e7f8e;font-weight:bold;transform:scaleX(1.1098);transform-origin:0 0;">DESTINATION U...</div>
<div class="t" style="left:2801.3px;top:1155.0px;font-size:24.00px;line-height:24.00px;color:#5e7f8e;font-weight:bold;">BYTES</div>
<div class="t" style="left:2927.4px;top:1155.0px;font-size:24.00px;line-height:24.00px;color:#5e7f8e;font-weight:bold;">SESSIO...</div>
<div class="t" style="left:3072.0px;top:1155.0px;font-size:24.00px;line-height:24.00px;color:#5e7f8e;font-weight:bold;transform:scaleX(1.0579);transform-origin:0 0;">THREATS</div>
<div class="t" style="left:3217.5px;top:1155.0px;font-size:24.00px;line-height:24.00px;color:#5e7f8e;font-weight:bold;transform:scaleX(1.0435);transform-origin:0 0;">CONTE...</div>
<div class="t" style="left:3389.0px;top:1155.0px;font-size:24.00px;line-height:24.00px;color:#5e7f8e;font-weight:bold;transform:scaleX(0.9948);transform-origin:0 0;">URLS</div>
<div class="t" style="left:3533.0px;top:1155.0px;font-size:24.00px;line-height:24.00px;color:#5e7f8e;font-weight:bold;transform:scaleX(1.0070);transform-origin:0 0;">APPS</div>
<div class="t" style="left:3652.4px;top:1155.0px;font-size:24.00px;line-height:24.00px;color:#5e7f8e;font-weight:bold;transform:scaleX(1.0199);transform-origin:0 0;">SOURC...</div>
<div style="position:absolute;left:539.7px;top:1133.0px;width:1570.3px;height:0.0px;"></div>
<div style="position:absolute;left:2190.0px;top:1200.0px;width:1595.0px;height:2.0px;background:#cdd1d4;"></div>
<div class="t" style="left:2205.5px;top:1209.8px;font-size:29.00px;line-height:29.00px;color:#1e91cf;font-weight:normal;transform:scaleX(0.9407);transform-origin:0 0;">None</div>
<div class="t" style="left:2521.0px;top:1209.8px;font-size:29.00px;line-height:29.00px;color:#1e91cf;font-weight:normal;transform:scaleX(0.9407);transform-origin:0 0;">None</div>
<div class="t" style="left:2804.8px;top:1212.6px;font-size:27.50px;line-height:27.50px;color:#111111;font-weight:normal;">4.0G</div>
<div style="position:absolute;left:2875.5px;top:1212.4px;width:27.0px;height:24.4px;background:#7a848d;"></div>
<div class="t" style="left:2929.1px;top:1212.6px;font-size:27.50px;line-height:27.50px;color:#111111;font-weight:normal;">12.8M</div>
<div style="position:absolute;left:3015.5px;top:1212.4px;width:32.0px;height:24.4px;background:#7a848d;"></div>
<div class="t" style="left:3085.8px;top:1212.6px;font-size:27.50px;line-height:27.50px;color:#111111;font-weight:normal;">80</div>
<div style="position:absolute;left:3127.0px;top:1212.4px;width:35.0px;height:24.4px;background:#7a848d;"></div>
<div class="t" style="left:3266.4px;top:1212.6px;font-size:27.50px;line-height:27.50px;color:#111111;font-weight:normal;">0</div>
<div class="t" style="left:3411.4px;top:1212.6px;font-size:27.50px;line-height:27.50px;color:#111111;font-weight:normal;">0</div>
<div class="t" style="left:3505.7px;top:1212.6px;font-size:27.50px;line-height:27.50px;color:#111111;font-weight:normal;">1</div>
<div style="position:absolute;left:3532.0px;top:1212.4px;width:95.0px;height:24.4px;background:#7a848d;"></div>
<div class="t" style="left:3652.1px;top:1212.6px;font-size:27.50px;line-height:27.50px;color:#111111;font-weight:normal;">52</div>
<div style="position:absolute;left:3692.0px;top:1212.4px;width:51.0px;height:24.4px;background:#7a848d;"></div>
<div style="position:absolute;left:2190.0px;top:1250.0px;width:1553.0px;height:2.0px;background:#e9ebec;"></div>
<div class="t" style="left:2205.5px;top:1259.9px;font-size:29.00px;line-height:29.00px;color:#1e91cf;font-weight:normal;transform:scaleX(0.9407);transform-origin:0 0;">dorothy.morrill</div>
<div class="t" style="left:2521.0px;top:1259.9px;font-size:29.00px;line-height:29.00px;color:#1e91cf;font-weight:normal;transform:scaleX(0.9407);transform-origin:0 0;">None</div>
<div class="t" style="left:2788.0px;top:1262.7px;font-size:27.50px;line-height:27.50px;color:#111111;font-weight:normal;">14.5M</div>
<div style="position:absolute;left:2875.5px;top:1262.5px;width:2.0px;height:24.4px;background:#7a848d;"></div>
<div class="t" style="left:2938.1px;top:1262.7px;font-size:27.50px;line-height:27.50px;color:#111111;font-weight:normal;">24.1k</div>
<div style="position:absolute;left:3015.5px;top:1262.5px;width:2.0px;height:24.4px;background:#7a848d;"></div>
<div class="t" style="left:3085.8px;top:1262.7px;font-size:27.50px;line-height:27.50px;color:#111111;font-weight:normal;">40</div>
<div style="position:absolute;left:3127.0px;top:1262.5px;width:17.0px;height:24.4px;background:#7a848d;"></div>
<div class="t" style="left:3266.4px;top:1262.7px;font-size:27.50px;line-height:27.50px;color:#111111;font-weight:normal;">0</div>
<div class="t" style="left:3411.4px;top:1262.7px;font-size:27.50px;line-height:27.50px;color:#111111;font-weight:normal;">0</div>
<div class="t" style="left:3505.7px;top:1262.7px;font-size:27.50px;line-height:27.50px;color:#111111;font-weight:normal;">1</div>
<div style="position:absolute;left:3532.0px;top:1262.5px;width:95.0px;height:24.4px;background:#7a848d;"></div>
<div class="t" style="left:3665.4px;top:1259.7px;font-size:27.50px;line-height:27.50px;color:#111111;font-weight:normal;">0</div>
<div style="position:absolute;left:2190.0px;top:1300.0px;width:1553.0px;height:2.0px;background:#e9ebec;"></div>
<div class="t" style="left:2205.5px;top:1309.9px;font-size:29.00px;line-height:29.00px;color:#1e91cf;font-weight:normal;transform:scaleX(0.9407);transform-origin:0 0;">rickey.herman</div>
<div class="t" style="left:2521.0px;top:1309.9px;font-size:29.00px;line-height:29.00px;color:#1e91cf;font-weight:normal;transform:scaleX(0.9407);transform-origin:0 0;">None</div>
<div class="t" style="left:2803.3px;top:1312.7px;font-size:27.50px;line-height:27.50px;color:#111111;font-weight:normal;">5.5M</div>
<div style="position:absolute;left:2875.5px;top:1312.5px;width:2.0px;height:24.4px;background:#7a848d;"></div>
<div class="t" style="left:2953.5px;top:1312.7px;font-size:27.50px;line-height:27.50px;color:#111111;font-weight:normal;">9.8k</div>
<div style="position:absolute;left:3015.5px;top:1312.5px;width:2.0px;height:24.4px;background:#7a848d;"></div>
<div class="t" style="left:3101.1px;top:1312.7px;font-size:27.50px;line-height:27.50px;color:#111111;font-weight:normal;">4</div>
<div style="position:absolute;left:3127.0px;top:1312.5px;width:3.0px;height:24.4px;background:#7a848d;"></div>
<div class="t" style="left:3266.4px;top:1312.7px;font-size:27.50px;line-height:27.50px;color:#111111;font-weight:normal;">0</div>
<div class="t" style="left:3411.4px;top:1312.7px;font-size:27.50px;line-height:27.50px;color:#111111;font-weight:normal;">0</div>
<div class="t" style="left:3505.7px;top:1312.7px;font-size:27.50px;line-height:27.50px;color:#111111;font-weight:normal;">1</div>
<div style="position:absolute;left:3532.0px;top:1312.5px;width:95.0px;height:24.4px;background:#7a848d;"></div>
<div class="t" style="left:3665.4px;top:1309.7px;font-size:27.50px;line-height:27.50px;color:#111111;font-weight:normal;">0</div>
<div style="position:absolute;left:2190.0px;top:1350.1px;width:1553.0px;height:2.0px;background:#e9ebec;"></div>
<div class="t" style="left:2206.2px;top:1360.0px;font-size:29.00px;line-height:29.00px;color:#1e91cf;font-weight:normal;transform:scaleX(0.9407);transform-origin:0 0;">jordan.bowery</div>
<div class="t" style="left:2521.0px;top:1360.0px;font-size:29.00px;line-height:29.00px;color:#1e91cf;font-weight:normal;transform:scaleX(0.9407);transform-origin:0 0;">None</div>
<div class="t" style="left:2803.3px;top:1362.8px;font-size:27.50px;line-height:27.50px;color:#111111;font-weight:normal;">4.7M</div>
<div style="position:absolute;left:2875.5px;top:1362.6px;width:2.0px;height:24.4px;background:#7a848d;"></div>
<div class="t" style="left:2938.1px;top:1362.8px;font-size:27.50px;line-height:27.50px;color:#111111;font-weight:normal;">15.4k</div>
<div style="position:absolute;left:3015.5px;top:1362.6px;width:2.0px;height:24.4px;background:#7a848d;"></div>
<div class="t" style="left:3101.1px;top:1362.8px;font-size:27.50px;line-height:27.50px;color:#111111;font-weight:normal;">4</div>
<div style="position:absolute;left:3127.0px;top:1362.6px;width:3.0px;height:24.4px;background:#7a848d;"></div>
<div class="t" style="left:3266.4px;top:1362.8px;font-size:27.50px;line-height:27.50px;color:#111111;font-weight:normal;">0</div>
<div class="t" style="left:3411.4px;top:1362.8px;font-size:27.50px;line-height:27.50px;color:#111111;font-weight:normal;">0</div>
<div class="t" style="left:3505.7px;top:1362.8px;font-size:27.50px;line-height:27.50px;color:#111111;font-weight:normal;">1</div>
<div style="position:absolute;left:3532.0px;top:1362.6px;width:95.0px;height:24.4px;background:#7a848d;"></div>
<div class="t" style="left:3665.4px;top:1359.8px;font-size:27.50px;line-height:27.50px;color:#111111;font-weight:normal;">0</div>
<div style="position:absolute;left:2190.0px;top:1400.2px;width:1553.0px;height:2.0px;background:#e9ebec;"></div>
<div class="t" style="left:2205.5px;top:1410.0px;font-size:29.00px;line-height:29.00px;color:#1e91cf;font-weight:normal;transform:scaleX(0.9407);transform-origin:0 0;">None</div>
<div class="t" style="left:2521.0px;top:1410.0px;font-size:29.00px;line-height:29.00px;color:#1e91cf;font-weight:normal;transform:scaleX(0.9407);transform-origin:0 0;">dorothy.morrill</div>
<div class="t" style="left:2803.3px;top:1412.8px;font-size:27.50px;line-height:27.50px;color:#111111;font-weight:normal;">2.6M</div>
<div style="position:absolute;left:2875.5px;top:1412.6px;width:2.0px;height:24.4px;background:#7a848d;"></div>
<div class="t" style="left:2953.5px;top:1412.8px;font-size:27.50px;line-height:27.50px;color:#111111;font-weight:normal;">7.3k</div>
<div style="position:absolute;left:3015.5px;top:1412.6px;width:2.0px;height:24.4px;background:#7a848d;"></div>
<div class="t" style="left:3085.8px;top:1412.8px;font-size:27.50px;line-height:27.50px;color:#111111;font-weight:normal;">68</div>
<div style="position:absolute;left:3127.0px;top:1412.6px;width:30.0px;height:24.4px;background:#7a848d;"></div>
<div class="t" style="left:3266.4px;top:1412.8px;font-size:27.50px;line-height:27.50px;color:#111111;font-weight:normal;">0</div>
<div class="t" style="left:3411.4px;top:1412.8px;font-size:27.50px;line-height:27.50px;color:#111111;font-weight:normal;">0</div>
<div class="t" style="left:3505.7px;top:1412.8px;font-size:27.50px;line-height:27.50px;color:#111111;font-weight:normal;">1</div>
<div style="position:absolute;left:3532.0px;top:1412.6px;width:95.0px;height:24.4px;background:#7a848d;"></div>
<div class="t" style="left:3665.4px;top:1409.8px;font-size:27.50px;line-height:27.50px;color:#111111;font-weight:normal;">0</div>
<div style="position:absolute;left:2190.0px;top:1450.2px;width:1553.0px;height:2.0px;background:#e9ebec;"></div>
<div class="t" style="left:2205.5px;top:1460.1px;font-size:29.00px;line-height:29.00px;color:#1e91cf;font-weight:normal;transform:scaleX(0.9407);transform-origin:0 0;">None</div>
<div class="t" style="left:2521.0px;top:1460.1px;font-size:29.00px;line-height:29.00px;color:#1e91cf;font-weight:normal;transform:scaleX(0.9407);transform-origin:0 0;">rickey.herman</div>
<div class="t" style="left:2803.3px;top:1462.9px;font-size:27.50px;line-height:27.50px;color:#111111;font-weight:normal;">1.9M</div>
<div style="position:absolute;left:2875.5px;top:1462.7px;width:2.0px;height:24.4px;background:#7a848d;"></div>
<div class="t" style="left:2953.5px;top:1462.9px;font-size:27.50px;line-height:27.50px;color:#111111;font-weight:normal;">6.4k</div>
<div style="position:absolute;left:3015.5px;top:1462.7px;width:2.0px;height:24.4px;background:#7a848d;"></div>
<div class="t" style="left:3085.8px;top:1462.9px;font-size:27.50px;line-height:27.50px;color:#111111;font-weight:normal;">88</div>
<div style="position:absolute;left:3127.0px;top:1462.7px;width:38.0px;height:24.4px;background:#7a848d;"></div>
<div class="t" style="left:3266.4px;top:1462.9px;font-size:27.50px;line-height:27.50px;color:#111111;font-weight:normal;">0</div>
<div class="t" style="left:3411.4px;top:1462.9px;font-size:27.50px;line-height:27.50px;color:#111111;font-weight:normal;">0</div>
<div class="t" style="left:3505.7px;top:1462.9px;font-size:27.50px;line-height:27.50px;color:#111111;font-weight:normal;">1</div>
<div style="position:absolute;left:3532.0px;top:1462.7px;width:95.0px;height:24.4px;background:#7a848d;"></div>
<div class="t" style="left:3665.4px;top:1459.9px;font-size:27.50px;line-height:27.50px;color:#111111;font-weight:normal;">0</div>
<div style="position:absolute;left:2190.0px;top:1500.2px;width:1553.0px;height:2.0px;background:#e9ebec;"></div>
<div class="t" style="left:2205.5px;top:1510.1px;font-size:29.00px;line-height:29.00px;color:#1e91cf;font-weight:normal;transform:scaleX(0.9407);transform-origin:0 0;">marc.albrighton</div>
<div class="t" style="left:2521.0px;top:1510.1px;font-size:29.00px;line-height:29.00px;color:#1e91cf;font-weight:normal;transform:scaleX(0.9407);transform-origin:0 0;">None</div>
<div class="t" style="left:2803.3px;top:1512.9px;font-size:27.50px;line-height:27.50px;color:#111111;font-weight:normal;">1.0M</div>
<div style="position:absolute;left:2875.5px;top:1512.7px;width:2.0px;height:24.4px;background:#7a848d;"></div>
<div class="t" style="left:2953.5px;top:1512.9px;font-size:27.50px;line-height:27.50px;color:#111111;font-weight:normal;">3.2k</div>
<div style="position:absolute;left:3015.5px;top:1512.7px;width:2.0px;height:24.4px;background:#7a848d;"></div>
<div class="t" style="left:3100.4px;top:1511.4px;font-size:27.50px;line-height:27.50px;color:#111111;font-weight:normal;">0</div>
<div class="t" style="left:3266.4px;top:1512.9px;font-size:27.50px;line-height:27.50px;color:#111111;font-weight:normal;">0</div>
<div class="t" style="left:3411.4px;top:1512.9px;font-size:27.50px;line-height:27.50px;color:#111111;font-weight:normal;">0</div>
<div class="t" style="left:3505.7px;top:1512.9px;font-size:27.50px;line-height:27.50px;color:#111111;font-weight:normal;">1</div>
<div style="position:absolute;left:3532.0px;top:1512.7px;width:95.0px;height:24.4px;background:#7a848d;"></div>
<div class="t" style="left:3665.4px;top:1509.9px;font-size:27.50px;line-height:27.50px;color:#111111;font-weight:normal;">0</div>
<div style="position:absolute;left:2190.0px;top:1550.3px;width:1553.0px;height:2.0px;background:#e9ebec;"></div>
<div class="t" style="left:2205.5px;top:1560.2px;font-size:29.00px;line-height:29.00px;color:#1e91cf;font-weight:normal;transform:scaleX(0.9407);transform-origin:0 0;">None</div>
<div class="t" style="left:2521.0px;top:1560.2px;font-size:29.00px;line-height:29.00px;color:#1e91cf;font-weight:normal;transform:scaleX(0.9407);transform-origin:0 0;">corey.surman</div>
<div class="t" style="left:2781.8px;top:1563.0px;font-size:27.50px;line-height:27.50px;color:#111111;font-weight:normal;">709.0k</div>
<div style="position:absolute;left:2875.5px;top:1562.8px;width:2.0px;height:24.4px;background:#7a848d;"></div>
<div class="t" style="left:2953.5px;top:1563.0px;font-size:27.50px;line-height:27.50px;color:#111111;font-weight:normal;">3.2k</div>
<div style="position:absolute;left:3015.5px;top:1562.8px;width:2.0px;height:24.4px;background:#7a848d;"></div>
<div class="t" style="left:3100.4px;top:1561.5px;font-size:27.50px;line-height:27.50px;color:#111111;font-weight:normal;">0</div>
<div class="t" style="left:3266.4px;top:1563.0px;font-size:27.50px;line-height:27.50px;color:#111111;font-weight:normal;">0</div>
<div class="t" style="left:3411.4px;top:1563.0px;font-size:27.50px;line-height:27.50px;color:#111111;font-weight:normal;">0</div>
<div class="t" style="left:3505.7px;top:1563.0px;font-size:27.50px;line-height:27.50px;color:#111111;font-weight:normal;">1</div>
<div style="position:absolute;left:3532.0px;top:1562.8px;width:95.0px;height:24.4px;background:#7a848d;"></div>
<div class="t" style="left:3665.4px;top:1560.0px;font-size:27.50px;line-height:27.50px;color:#111111;font-weight:normal;">0</div>
<div style="position:absolute;left:2190.0px;top:1600.3px;width:1553.0px;height:2.0px;background:#e9ebec;"></div>
<div class="t" style="left:2205.5px;top:1610.2px;font-size:29.00px;line-height:29.00px;color:#1e91cf;font-weight:normal;transform:scaleX(0.9407);transform-origin:0 0;">angela.tapia</div>
<div class="t" style="left:2521.0px;top:1610.2px;font-size:29.00px;line-height:29.00px;color:#1e91cf;font-weight:normal;transform:scaleX(0.9407);transform-origin:0 0;">None</div>
<div class="t" style="left:2781.8px;top:1613.0px;font-size:27.50px;line-height:27.50px;color:#111111;font-weight:normal;">647.0k</div>
<div style="position:absolute;left:2875.5px;top:1612.8px;width:2.0px;height:24.4px;background:#7a848d;"></div>
<div class="t" style="left:2953.5px;top:1613.0px;font-size:27.50px;line-height:27.50px;color:#111111;font-weight:normal;">2.7k</div>
<div style="position:absolute;left:3015.5px;top:1612.8px;width:2.0px;height:24.4px;background:#7a848d;"></div>
<div class="t" style="left:3100.4px;top:1611.5px;font-size:27.50px;line-height:27.50px;color:#111111;font-weight:normal;">0</div>
<div class="t" style="left:3266.4px;top:1613.0px;font-size:27.50px;line-height:27.50px;color:#111111;font-weight:normal;">0</div>
<div class="t" style="left:3411.4px;top:1613.0px;font-size:27.50px;line-height:27.50px;color:#111111;font-weight:normal;">0</div>
<div class="t" style="left:3505.7px;top:1613.0px;font-size:27.50px;line-height:27.50px;color:#111111;font-weight:normal;">1</div>
<div style="position:absolute;left:3532.0px;top:1612.8px;width:95.0px;height:24.4px;background:#7a848d;"></div>
<div class="t" style="left:3665.4px;top:1610.0px;font-size:27.50px;line-height:27.50px;color:#111111;font-weight:normal;">0</div>
<div style="position:absolute;left:2190.0px;top:1650.4px;width:1553.0px;height:2.0px;background:#e9ebec;"></div>
<div class="t" style="left:2205.5px;top:1660.3px;font-size:29.00px;line-height:29.00px;color:#1e91cf;font-weight:normal;transform:scaleX(0.9407);transform-origin:0 0;">forrest.fox</div>
<div class="t" style="left:2521.0px;top:1660.3px;font-size:29.00px;line-height:29.00px;color:#1e91cf;font-weight:normal;transform:scaleX(0.9407);transform-origin:0 0;">None</div>
<div class="t" style="left:2781.8px;top:1663.1px;font-size:27.50px;line-height:27.50px;color:#111111;font-weight:normal;">604.4k</div>
<div style="position:absolute;left:2875.5px;top:1662.9px;width:2.0px;height:24.4px;background:#7a848d;"></div>
<div class="t" style="left:2953.5px;top:1663.1px;font-size:27.50px;line-height:27.50px;color:#111111;font-weight:normal;">1.7k</div>
<div style="position:absolute;left:3015.5px;top:1662.9px;width:2.0px;height:24.4px;background:#7a848d;"></div>
<div class="t" style="left:3100.4px;top:1661.6px;font-size:27.50px;line-height:27.50px;color:#111111;font-weight:normal;">0</div>
<div class="t" style="left:3266.4px;top:1663.1px;font-size:27.50px;line-height:27.50px;color:#111111;font-weight:normal;">0</div>
<div class="t" style="left:3411.4px;top:1663.1px;font-size:27.50px;line-height:27.50px;color:#111111;font-weight:normal;">0</div>
<div class="t" style="left:3505.7px;top:1663.1px;font-size:27.50px;line-height:27.50px;color:#111111;font-weight:normal;">1</div>
<div style="position:absolute;left:3532.0px;top:1662.9px;width:95.0px;height:24.4px;background:#7a848d;"></div>
<div class="t" style="left:3665.4px;top:1660.1px;font-size:27.50px;line-height:27.50px;color:#111111;font-weight:normal;">0</div>
<div style="position:absolute;left:2190.0px;top:1700.5px;width:1553.0px;height:2.0px;background:#e9ebec;"></div>
<div style="position:absolute;left:3743.0px;top:1201.0px;width:41.0px;height:510.0px;background:#f1f1f1;border-radius:0 0 8px 0;"></div>
<div style="position:absolute;left:3745.4px;top:1244.0px;width:37.6px;height:395.0px;background:#c1c1c1;"></div>
<svg style="position:absolute;left:3753.0px;top:1217.0px;" width="21.0" height="13.0" viewBox="0 0 21.0 13.0"><polygon points="0.5,12 10.5,1 20.5,12" fill="#a3a3a3"/></svg>
<svg style="position:absolute;left:3753.0px;top:1684.0px;" width="21.0" height="12.0" viewBox="0 0 21.0 12.0"><polygon points="0.5,1 20.5,1 10.5,11.5" fill="#505050"/></svg>
<div style="position:absolute;left:2175.0px;top:1712.5px;width:1623.0px;height:2.5px;background:#d5d8db;"></div>
<div style="position:absolute;left:3798.0px;top:303.0px;width:42.0px;height:1436.0px;background:#f1f1f1;"></div>
<div style="position:absolute;left:3800.0px;top:345.6px;width:38.0px;height:271.1px;background:#c1c1c1;"></div>
<svg style="position:absolute;left:3809.0px;top:319.0px;" width="21.0" height="12.0" viewBox="0 0 21.0 12.0"><polygon points="0.5,11.5 10.5,1 20.5,11.5" fill="#a3a3a3"/></svg>
<svg style="position:absolute;left:3809.0px;top:1710.0px;" width="21.0" height="12.0" viewBox="0 0 21.0 12.0"><polygon points="0.5,1 20.5,1 10.5,11.5" fill="#505050"/></svg>
<div style="position:absolute;left:0.0px;top:1739.0px;width:3840.0px;height:65.0px;background:#03111a;"></div>
<div style="position:absolute;left:0.0px;top:1750.0px;width:319.0px;height:54.0px;background:#d6d9dd;border-radius:0 9px 0 0;"></div>
<div style="position:absolute;left:0.0px;top:1761.0px;width:310.0px;height:33.0px;background:#c3c6cb;filter:blur(3px);"></div>
<div class="t" style="left:329.0px;top:1755.0px;font-size:30.80px;line-height:30.80px;color:#bfc5cb;font-weight:normal;transform:scaleX(0.9946);transform-origin:0 0;">Login Time: 09/14/2020 11:33:36</div>
<div style="position:absolute;left:789.0px;top:1754.0px;width:4.5px;height:33.0px;background:#5d666d;"></div>
<div class="t" style="left:806.5px;top:1755.0px;font-size:30.80px;line-height:30.80px;color:#bfc5cb;font-weight:normal;transform:scaleX(0.97);transform-origin:0 0;">Session Expire Time: 10/11/2020 11:33:36</div>
<div class="t" style="left:3161.0px;top:1754.9px;font-size:30.50px;line-height:30.50px;color:#bfc5cb;font-weight:normal;transform:scaleX(0.9362);transform-origin:0 0;">active</div>
<div style="position:absolute;left:3250.3px;top:1754.3px;width:4.9px;height:32.7px;background:#4f585f;"></div>
<svg style="position:absolute;left:3270.0px;top:1752.0px;" width="44.0" height="38.0" viewBox="0 0 44.0 38.0"><polyline points="2.5,7 6,10.5 13.5,3" fill="none" stroke="#bfc5cb" stroke-width="2.4"/><polyline points="2.5,19.5 6,23 13.5,15.5" fill="none" stroke="#bfc5cb" stroke-width="2.4"/><polyline points="2.5,32 6,35.5 13.5,28" fill="none" stroke="#bfc5cb" stroke-width="2.4"/><line x1="19.4" y1="8.7" x2="42.2" y2="8.7" stroke="#bfc5cb" stroke-width="2.6"/><line x1="19.4" y1="21.4" x2="42.2" y2="21.4" stroke="#bfc5cb" stroke-width="2.6"/><line x1="19.4" y1="34" x2="42.2" y2="34" stroke="#bfc5cb" stroke-width="2.6"/></svg>
<div class="t" style="left:3322.5px;top:1754.9px;font-size:30.50px;line-height:30.50px;color:#bfc5cb;font-weight:normal;transform:scaleX(0.8585);transform-origin:0 0;">Tasks</div>
<div style="position:absolute;left:3414.5px;top:1754.3px;width:5.0px;height:32.7px;background:#4f585f;"></div>
<div class="t" style="left:3438.3px;top:1754.9px;font-size:30.50px;line-height:30.50px;color:#bfc5cb;font-weight:normal;transform:scaleX(0.8849);transform-origin:0 0;">Language</div>
<svg style="position:absolute;left:3585.0px;top:1745.0px;" width="60.0" height="55.0" viewBox="0 0 60.0 55.0"><g fill="#fa582d"><polygon points="26.8,11.1 33.6,18 13.6,36.8 8,29.8"/><polygon points="41.1,11.1 48.2,18.2 26.8,48.9 17.7,40.2"/><polygon points="51.8,21.8 58.6,29.1 41.4,47.5 35,40.9"/></g></svg>
<div class="t" style="left:3652.0px;top:1751.2px;font-size:41.00px;line-height:41.00px;color:#ffffff;font-weight:bold;transform:scaleX(1.0182);transform-origin:0 0;">paloalto</div>
<div class="t" style="left:3730.0px;top:1791.1px;font-size:7.50px;line-height:7.50px;color:#ffffff;font-weight:bold;transform:scaleX(1.6917);transform-origin:0 0;">NETWORKS</div>
<div style="position:absolute;left:939.0px;top:1197.0px;width:260.0px;height:123.0px;box-sizing:border-box;background:#fff;border:2px solid #cfd2d5;border-radius:6px;box-shadow:0 1px 4px rgba(0,0,0,0.12);"></div>
<div style="position:absolute;left:941.0px;top:1258.7px;width:256.0px;height:50.3px;background:#e4f2fa;"></div>
<svg style="position:absolute;left:955.0px;top:1214.0px;" width="40.0" height="40.0" viewBox="0 0 40.0 40.0"><circle cx="15.5" cy="15.5" r="12.5" fill="none" stroke="#8a8f94" stroke-width="2.8"/><line x1="24.5" y1="24.5" x2="36" y2="36" stroke="#8a8f94" stroke-width="2.8"/></svg>
<div class="t" style="left:1008.4px;top:1217.6px;font-size:28.70px;line-height:28.70px;color:#2f363c;font-weight:normal;transform:scaleX(0.9237);transform-origin:0 0;">Global Find</div>
<svg style="position:absolute;left:958.0px;top:1267.0px;" width="35.0" height="36.0" viewBox="0 0 35.0 36.0"><rect x="2" y="2" width="30" height="33" rx="3" fill="none" stroke="#1f6d9a" stroke-width="3"/><line x1="8" y1="11" x2="26" y2="11" stroke="#1f6d9a" stroke-width="2.4"/><line x1="8" y1="17" x2="26" y2="17" stroke="#1f6d9a" stroke-width="2.4"/><line x1="8" y1="23" x2="26" y2="23" stroke="#1f6d9a" stroke-width="2.4"/><line x1="8" y1="29" x2="26" y2="29" stroke="#1f6d9a" stroke-width="2.4"/></svg>
<div class="t" style="left:1008.4px;top:1268.0px;font-size:28.70px;line-height:28.70px;color:#2f363c;font-weight:normal;transform:scaleX(0.9137);transform-origin:0 0;">Value</div>
<svg style="position:absolute;left:1168.0px;top:1271.0px;" width="18.0" height="26.0" viewBox="0 0 18.0 26.0"><polyline points="3,2.5 14,13 3,23.5" fill="none" stroke="#333" stroke-width="3.2"/></svg>
<div style="position:absolute;left:1199.0px;top:705.0px;width:600.0px;height:1088.0px;box-sizing:border-box;background:#fff;border:2px solid #c5c9cd;border-radius:7px;box-shadow:0 2px 6px rgba(0,0,0,0.15);"></div>
<div style="position:absolute;left:1215.0px;top:721.3px;width:565.2px;height:34.7px;background:#f6d06d;"></div>
<div class="t" style="left:1427.0px;top:722.5px;font-size:29.50px;line-height:29.50px;color:#111111;font-weight:bold;transform:scaleX(0.8766);transform-origin:0 0;">Application</div>
<div class="t" style="left:1313.8px;top:762.7px;font-size:28.60px;line-height:28.60px;color:#111111;font-weight:normal;transform:scaleX(0.8881);transform-origin:0 0;">Name:</div>
<div class="t" style="left:1244.6px;top:802.9px;font-size:28.60px;line-height:28.60px;color:#111111;font-weight:normal;transform:scaleX(0.9536);transform-origin:0 0;">Description:</div>
<div class="t" style="left:1274.4px;top:1437.5px;font-size:28.60px;line-height:28.60px;color:#111111;font-weight:normal;transform:scaleX(0.9211);transform-origin:0 0;">Category:</div>
<div class="t" style="left:1234.0px;top:1477.4px;font-size:28.60px;line-height:28.60px;color:#111111;font-weight:normal;transform:scaleX(0.9174);transform-origin:0 0;">Subcategory:</div>
<div class="t" style="left:1246.9px;top:1517.1px;font-size:28.60px;line-height:28.60px;color:#111111;font-weight:normal;transform:scaleX(0.9283);transform-origin:0 0;">Technology:</div>
<div class="t" style="left:1335.3px;top:1557.7px;font-size:28.60px;line-height:28.60px;color:#111111;font-weight:normal;transform:scaleX(0.8385);transform-origin:0 0;">Risk:</div>
<div class="t" style="left:1284.3px;top:1597.4px;font-size:28.60px;line-height:28.60px;color:#111111;font-weight:normal;transform:scaleX(0.8988);transform-origin:0 0;">Standard</div>
<div class="t" style="left:1322.0px;top:1632.5px;font-size:28.60px;line-height:28.60px;color:#111111;font-weight:normal;transform:scaleX(0.8914);transform-origin:0 0;">Ports:</div>
<div class="t" style="left:1217.6px;top:1672.4px;font-size:28.60px;line-height:28.60px;color:#111111;font-weight:normal;transform:scaleX(0.9357);transform-origin:0 0;">Characteristic:</div>
<div class="t" style="left:1406.0px;top:762.7px;font-size:28.60px;line-height:28.60px;color:#111111;font-weight:normal;transform:scaleX(0.8999);transform-origin:0 0;">dns</div>
<div class="t" style="left:1406.0px;top:802.9px;font-size:28.60px;line-height:28.60px;color:#111111;font-weight:normal;transform:scaleX(0.9274);transform-origin:0 0;">The Domain Name System</div>
<div class="t" style="left:1406.0px;top:837.9px;font-size:28.60px;line-height:28.60px;color:#111111;font-weight:normal;transform:scaleX(0.9082);transform-origin:0 0;">(DNS) stores and associates</div>
<div class="t" style="left:1406.0px;top:872.9px;font-size:28.60px;line-height:28.60px;color:#111111;font-weight:normal;transform:scaleX(0.9610);transform-origin:0 0;">many types of information</div>
<div class="t" style="left:1406.1px;top:907.9px;font-size:28.60px;line-height:28.60px;color:#111111;font-weight:normal;transform:scaleX(0.9501);transform-origin:0 0;">with domain names, it</div>
<div class="t" style="left:1406.0px;top:942.9px;font-size:28.60px;line-height:28.60px;color:#111111;font-weight:normal;transform:scaleX(0.9285);transform-origin:0 0;">translates domain names</div>
<div class="t" style="left:1406.0px;top:977.9px;font-size:28.60px;line-height:28.60px;color:#111111;font-weight:normal;transform:scaleX(0.9310);transform-origin:0 0;">(computer hostnames) to IP</div>
<div class="t" style="left:1406.0px;top:1012.9px;font-size:28.60px;line-height:28.60px;color:#111111;font-weight:normal;transform:scaleX(0.9189);transform-origin:0 0;">addresses, as the &quot;&quot;phone</div>
<div class="t" style="left:1406.0px;top:1047.9px;font-size:28.60px;line-height:28.60px;color:#111111;font-weight:normal;transform:scaleX(0.9786);transform-origin:0 0;">book&quot;&quot; for the Internet. It</div>
<div class="t" style="left:1406.0px;top:1082.9px;font-size:28.60px;line-height:28.60px;color:#111111;font-weight:normal;transform:scaleX(0.9343);transform-origin:0 0;">translates human-readable</div>
<div class="t" style="left:1406.0px;top:1117.9px;font-size:28.60px;line-height:28.60px;color:#111111;font-weight:normal;transform:scaleX(0.9278);transform-origin:0 0;">computer hostnames, e.g.</div>
<div class="t" style="left:1406.1px;top:1152.9px;font-size:28.60px;line-height:28.60px;color:#111111;font-weight:normal;transform:scaleX(0.9694);transform-origin:0 0;">www.paloaltonetworks.com,</div>
<div class="t" style="left:1406.0px;top:1187.9px;font-size:28.60px;line-height:28.60px;color:#111111;font-weight:normal;transform:scaleX(0.9409);transform-origin:0 0;">into the IP addresses that</div>
<div class="t" style="left:1406.0px;top:1222.9px;font-size:28.60px;line-height:28.60px;color:#111111;font-weight:normal;transform:scaleX(0.9573);transform-origin:0 0;">networking equipment needs</div>
<div class="t" style="left:1406.0px;top:1257.9px;font-size:28.60px;line-height:28.60px;color:#111111;font-weight:normal;transform:scaleX(0.9751);transform-origin:0 0;">for delivering information. It</div>
<div class="t" style="left:1406.0px;top:1292.9px;font-size:28.60px;line-height:28.60px;color:#111111;font-weight:normal;transform:scaleX(0.9558);transform-origin:0 0;">also stores other information</div>
<div class="t" style="left:1406.0px;top:1327.9px;font-size:28.60px;line-height:28.60px;color:#111111;font-weight:normal;transform:scaleX(0.9326);transform-origin:0 0;">such as the list of mail</div>
<div class="t" style="left:1406.0px;top:1362.9px;font-size:28.60px;line-height:28.60px;color:#111111;font-weight:normal;transform:scaleX(0.9323);transform-origin:0 0;">exchange servers that accept</div>
<div class="t" style="left:1406.0px;top:1397.9px;font-size:28.60px;line-height:28.60px;color:#111111;font-weight:normal;transform:scaleX(0.9354);transform-origin:0 0;">e-mail for a given domain.</div>
<div class="t" style="left:1406.0px;top:1437.5px;font-size:28.60px;line-height:28.60px;color:#111111;font-weight:normal;transform:scaleX(0.9828);transform-origin:0 0;">networking</div>
<div class="t" style="left:1406.0px;top:1477.4px;font-size:28.60px;line-height:28.60px;color:#111111;font-weight:normal;transform:scaleX(0.9779);transform-origin:0 0;">infrastructure</div>
<div class="t" style="left:1406.0px;top:1517.1px;font-size:28.60px;line-height:28.60px;color:#111111;font-weight:normal;transform:scaleX(0.9866);transform-origin:0 0;">network-protocol</div>
<div class="t" style="left:1406.0px;top:1557.7px;font-size:28.60px;line-height:28.60px;color:#111111;font-weight:normal;transform:scaleX(0.9387);transform-origin:0 0;">3</div>
<div class="t" style="left:1406.0px;top:1597.4px;font-size:28.60px;line-height:28.60px;color:#111111;font-weight:normal;transform:scaleX(1.0342);transform-origin:0 0;">tcp/53</div>
<div class="t" style="left:1406.0px;top:1632.5px;font-size:28.60px;line-height:28.60px;color:#111111;font-weight:normal;transform:scaleX(0.9932);transform-origin:0 0;">udp/53,5353</div>
<div class="t" style="left:1406.0px;top:1672.4px;font-size:28.60px;line-height:28.60px;color:#111111;font-weight:normal;transform:scaleX(0.9360);transform-origin:0 0;">Used by Malware</div>
<div class="t" style="left:1406.0px;top:1707.5px;font-size:28.60px;line-height:28.60px;color:#111111;font-weight:normal;transform:scaleX(0.9720);transform-origin:0 0;">Vulnerability</div>
<div class="t" style="left:1406.0px;top:1742.2px;font-size:28.60px;line-height:28.60px;color:#111111;font-weight:normal;transform:scaleX(0.9467);transform-origin:0 0;">Widely used</div>
</body></html>
